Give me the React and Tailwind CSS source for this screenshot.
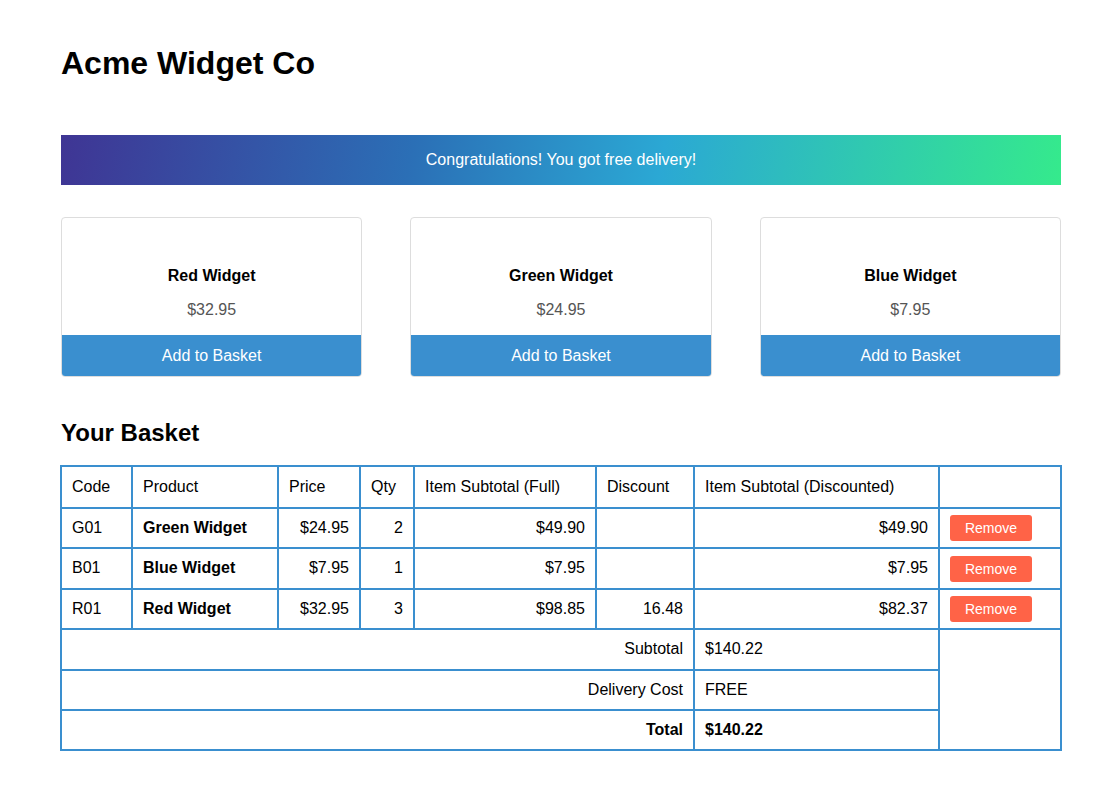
import React from 'react';

const products = [
  { code: 'R01', name: 'Red Widget', price: '$32.95' },
  { code: 'G01', name: 'Green Widget', price: '$24.95' },
  { code: 'B01', name: 'Blue Widget', price: '$7.95' },
];

const basket = [
  { code: 'G01', name: 'Green Widget', price: '$24.95', qty: 2, full: '$49.90', discount: '', disc: '$49.90' },
  { code: 'B01', name: 'Blue Widget', price: '$7.95', qty: 1, full: '$7.95', discount: '', disc: '$7.95' },
  { code: 'R01', name: 'Red Widget', price: '$32.95', qty: 3, full: '$98.85', discount: '16.48', disc: '$82.37' },
];

const border = 'border-2 border-[#3a8fcf] px-[10px]';
const cell = `${border} py-[10px] leading-[18.4px]`;
const head = `${border} py-[11px] leading-[18px] text-left font-normal`;

const App = () => {
  return (
    <div className="min-h-screen bg-white px-[61px] font-['Liberation_Sans',Arial,sans-serif] text-black">
      <div className="w-[1000px] pt-[45px] pb-10">
        <h1 className="text-[32px] font-bold leading-[37px] m-0">Acme Widget Co</h1>

        {/* Free delivery banner */}
        <div className="mt-[53px] h-[50px] flex items-center justify-center text-white text-base bg-[linear-gradient(100deg,#3f3594_0%,#2b6fb6_35%,#2ba8d4_60%,#35ea8c_100%)]">
          Congratulations! You got free delivery!
        </div>

        {/* Product cards */}
        <div className="mt-[32px] grid grid-cols-3 gap-12">
          {products.map((p) => (
            <div key={p.code} className="border border-[#dddddd] rounded-[4px] overflow-hidden flex flex-col">
              <div className="pt-[49px] pb-[16px] flex flex-col items-center gap-4">
                <div className="font-bold text-base leading-[18px]">{p.name}</div>
                <div className="text-base leading-[18px] text-[#555555]">{p.price}</div>
              </div>
              <button className="h-[41px] bg-[#3a8fcf] text-white text-base">Add to Basket</button>
            </div>
          ))}
        </div>

        <h2 className="mt-[42px] text-[24px] font-bold leading-[28px]">Your Basket</h2>

        <table className="mt-[18px] ml-[-1px] w-[1000px] border-collapse text-base table-fixed">
          <colgroup>
            <col className="w-[71px]" />
            <col className="w-[146px]" />
            <col className="w-[82px]" />
            <col className="w-[54px]" />
            <col className="w-[182px]" />
            <col className="w-[98px]" />
            <col className="w-[245px]" />
            <col className="w-[122px]" />
          </colgroup>
          <thead>
            <tr>
              <th className={head}>Code</th>
              <th className={head}>Product</th>
              <th className={head}>Price</th>
              <th className={head}>Qty</th>
              <th className={head}>Item Subtotal (Full)</th>
              <th className={head}>Discount</th>
              <th className={head}>Item Subtotal (Discounted)</th>
              <th className={head}></th>
            </tr>
          </thead>
          <tbody>
            {basket.map((row) => (
              <tr key={row.code}>
                <td className={cell}>{row.code}</td>
                <td className={`${cell} font-bold`}>{row.name}</td>
                <td className={`${cell} text-right`}>{row.price}</td>
                <td className={`${cell} text-right`}>{row.qty}</td>
                <td className={`${cell} text-right`}>{row.full}</td>
                <td className={`${cell} text-right`}>{row.discount}</td>
                <td className={`${cell} text-right`}>{row.disc}</td>
                <td className={`${border} py-0 align-middle`}>
                  <button className="block w-[82px] h-[26px] rounded-[3px] bg-[#ff6347] text-white text-sm leading-[26px]">Remove</button>
                </td>
              </tr>
            ))}
            <tr>
              <td colSpan={6} className={`${cell} text-right`}>Subtotal</td>
              <td className={cell}>$140.22</td>
              <td rowSpan={3} className={cell}></td>
            </tr>
            <tr>
              <td colSpan={6} className={`${cell} text-right`}>Delivery Cost</td>
              <td className={cell}>FREE</td>
            </tr>
            <tr>
              <td colSpan={6} className={`${cell} text-right font-bold`}>Total</td>
              <td className={`${cell} font-bold`}>$140.22</td>
            </tr>
          </tbody>
        </table>
      </div>
    </div>
  );
};

export default App;
